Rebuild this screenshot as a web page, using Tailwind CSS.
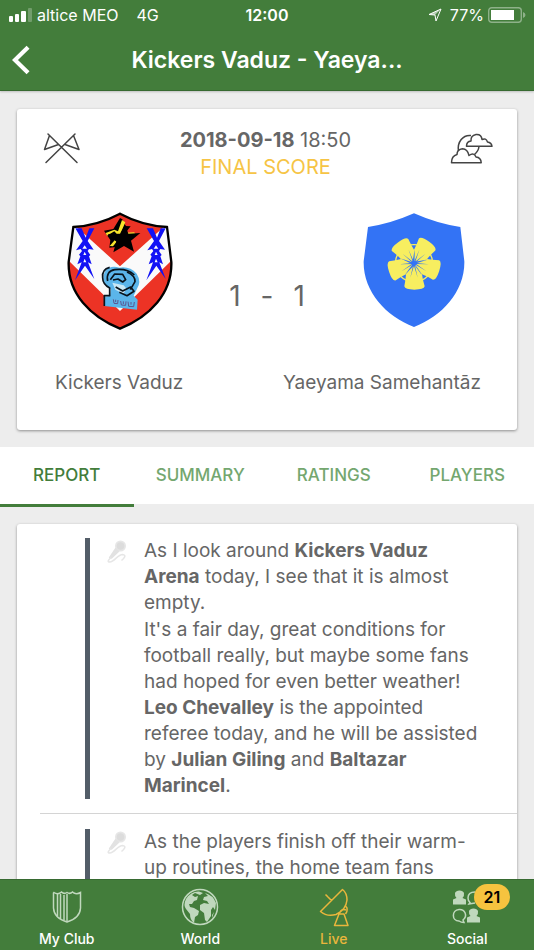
<!DOCTYPE html>
<html lang="en">
<head>
<meta charset="utf-8">
<meta name="viewport" content="width=device-width, initial-scale=1">
<title>Kickers Vaduz - Yaeyama Samehantāz</title>
<script src="https://cdn.jsdelivr.net/npm/@tailwindcss/browser@4"></script>
</head>
<body class="h-dvh flex flex-col overflow-hidden bg-[#ededed] font-[Inter,sans-serif] text-[#666]">

<header class="relative z-10 shrink-0 border-b border-[#376a31] bg-[#437d3b] text-white shadow-[0_1px_2px_rgba(0,0,0,0.2)]">
  <div class="grid h-[30px] grid-cols-3 items-center px-2 text-base">
    <div class="flex items-center whitespace-nowrap">
      <svg class="mr-1 h-4 w-[25px]" viewBox="0 0 25 16" fill="#fff" aria-hidden="true">
        <rect x="1" y="9" width="4" height="6" rx="1"/><rect x="7" y="7" width="4" height="8" rx="1"/><rect x="13" y="4" width="5" height="11" rx="1"/><rect x="20" y="1" width="4" height="14" rx="1" opacity=".25"/>
      </svg>
      <span>altice MEO</span><span class="ml-[18px]">4G</span>
    </div>
    <div class="text-center font-semibold">12:00</div>
    <div class="flex items-center justify-end whitespace-nowrap">
      <svg class="mr-2 h-[14px] w-[14px]" viewBox="0 0 14 14" aria-hidden="true"><path d="M13 1 1 6.500 7 7 8 13Z" fill="none" stroke="#fff" stroke-width="1"/><path d="M13 1 1 6.500 7 7Z" fill="#fff" opacity=".6"/></svg>
      <span>77%</span>
      <svg class="ml-1 h-4 w-[38px]" viewBox="0 0 38 16" aria-hidden="true"><rect x=".7" y=".7" width="32.600" height="14.600" rx="3" fill="none" stroke="#fff" stroke-opacity=".4" stroke-width="1.400"/><rect x="3" y="3" width="23" height="10" fill="#fff"/><path d="M35 5q2.500 1 2.500 3T35 11Z" fill="#fff" opacity=".4"/></svg>
    </div>
  </div>
  <div class="grid h-[60px] grid-cols-[60px_1fr_60px] items-center">
    <button type="button" aria-label="Back" class="h-full pl-3">
      <svg class="h-[30px] w-[19px]" viewBox="0 0 20 32" fill="none" stroke="#fff" stroke-width="4.500" aria-hidden="true"><path d="M17 2.500 3 16 17 29.500"/></svg>
    </button>
    <h1 class="text-center text-[23px] font-semibold whitespace-nowrap">Kickers Vaduz - Yaeya...</h1>
  </div>
</header>

<main class="min-h-0 flex-1 overflow-y-auto [scrollbar-width:none]">
  <section class="mx-[17px] mt-[18px] rounded-[3px] bg-white pb-[34px] shadow-[0_1px_3px_rgba(0,0,0,0.4)]">
    <div class="flex items-start justify-between px-6 pt-[18px]">
      <svg class="mt-[5px] h-[33px] w-[40px]" viewBox="41 132 40 33" fill="none" stroke="#444" stroke-width="1.500" stroke-linejoin="round" stroke-linecap="round" aria-hidden="true">
        <path d="M48 134 77 162.500M75 134 46 162.500M49.500 135.500 44.500 149.500 58.500 144.500M73.500 135.500 79 149.500 65 144.500"/>
      </svg>
      <div class="text-center text-[20px] leading-[27px]">
        <p><b class="font-bold">2018-09-18</b> 18:50</p>
        <p class="text-[#f6c445]">FINAL SCORE</p>
      </div>
      <svg class="mt-[5px] h-[33px] w-[43px]" viewBox="451 132 43 33" fill="none" stroke="#444" stroke-width="1.500" stroke-linejoin="round" aria-hidden="true">
        <path d="M459.500 151C458 142 464 134.500 472 135.500M480 146.500Q479.500 151 475.500 154.500"/>
        <path d="M467.500 146.300Q467.500 141.500 472 141Q471.500 135.500 477 134.500Q482.500 134 483 139.500Q487 137.500 488.500 142Q492.500 142.500 493 146.300Z"/>
        <path d="M452.500 162.700Q452.500 156 458 154.500Q458 149.500 463.500 148.800Q468.500 149 470 155.500Q475 152 477 157Q482 157.500 482.200 162.700Z"/>
      </svg>
    </div>

    <div class="mt-[31px] grid grid-cols-3 items-start justify-items-center px-[30px]">
      <svg class="h-[118px] w-[106px]" viewBox="38 35 318 354" role="img" aria-label="Kickers Vaduz crest">
        <defs>
          <clipPath id="shield"><path id="outline" d="M197 40Q262 75 338 80L351 185C354 280 285 350 197 385C109 350 40 280 43 185L57 80Q132 75 197 40Z"/></clipPath>
          <path id="bolts" d="M63 84H82L94 112 105 84H120L100 122 118 148 104 146 100 152 108 164 104 168 112 192 101 186 120 236 92 196 62 240 82 186 69 192 78 168 74 163 83 152 79 146 65 150 85 122ZM91 135 84 145H98ZM91 154 87 164H96ZM91 175 87 186H96Z" fill="#1212f5" fill-rule="evenodd"/>
        </defs>
        <g clip-path="url(#shield)">
          <path d="M38 35H356V389H38Z" fill="#ec3325"/>
          <path d="M38 70 67 80 197 198 328 80 356 70V176L197 332 38 176Z" fill="#fafafa"/>
        </g>
        <use href="#bolts"/><use href="#bolts" x="214"/>
        <path d="M197 53 204 57 214 77 229 78 210 102 185 140 165 142 168 119 149 91 177 86Z" fill="#000"/>
        <path d="M203 59 213 66 199 98 240 96 243 103 192 106 180 93 158 106 154 98 180 88 191 93ZM181 120 187 124 176 138 166 137Z" fill="#f8e52c"/>
        <path d="M213 74 222 100 258 98 230 121 239 154 209 137 177 156 186 123 160 101 197 100Z" fill="#000"/>
        <path d="M153 212Q168 194 195 202Q226 197 247 220Q262 244 248 265L238 286 250 298 248 328 150 317 148 290 167 286 169 266 153 251Q141 233 153 212Z" fill="#5bb5ea"/>
        <path d="M174 247 208 255 217 265 207 280 183 268Z" fill="#c9e8f6"/>
        <g fill="none" stroke="#08131c" stroke-width="5" stroke-linejoin="round">
          <path d="M166 201Q142 207 145 232Q145 251 166 263V286H150V317"/><path d="M160 242Q154 213 181 208Q218 203 240 224"/><path d="M168 238 181 221 205 222 214 238 205 245 191 236 176 239"/><path d="M218 215Q243 226 242 244L228 268M184 260 205 272 229 260 239 273 218 286 195 276"/>
        </g>
        <path d="M177 297l2 12 11 1 1-11M184 298v7M199 302l2 12 13 1 1-12M207 303v8M221 304l2 14 15 1 2-14M230 305v8" fill="none" stroke="#5b558f" stroke-width="3"/>
        <use href="#outline" fill="none" stroke="#000" stroke-width="7"/>
      </svg>
      <p class="mt-[66px] flex gap-5 text-[28px] leading-9"><span>1</span><span>-</span><span>1</span></p>
      <svg class="mt-[1px] h-[115px] w-[102px]" viewBox="37 40 306 345" role="img" aria-label="Yaeyama Samehantāz crest">
        <defs>
          <g id="petal"><path d="M190 191 166 224Q165 240 161 260Q163 270 191 270Q220 270 222 260Q216 240 214 224Z" fill="#f7ee60"/><path d="M190 184 179 234 190 198 201 234Z" fill="#3373f5"/><path d="M188 191 213 226 195 190Z" fill="#3373f5"/></g>
        </defs>
        <path d="M190 41Q260 72 329 82L341 185C343 275 275 350 190 382C105 350 37 275 39 185L52 82Q120 72 190 41Z" fill="#3373f5"/>
        <circle cx="190" cy="191" r="56" fill="none" stroke="#f7ee60" stroke-width="4"/>
        <use href="#petal"/><use href="#petal" transform="rotate(72 190 191)"/><use href="#petal" transform="rotate(144 190 191)"/><use href="#petal" transform="rotate(216 190 191)"/><use href="#petal" transform="rotate(288 190 191)"/>
        <circle cx="190" cy="191" r="7" fill="#3373f5"/>
      </svg>
    </div>
    <div class="mt-10 flex justify-between pr-9 pl-[38px] text-[19px] leading-[26px] whitespace-nowrap">
      <p>Kickers Vaduz</p>
      <p>Yaeyama Samehantāz</p>
    </div>
  </section>

  <nav class="mt-[17px] grid h-[60px] grid-cols-4 bg-[linear-gradient(#fff_57px,#ededed_57px)] text-[17px] font-medium text-[#74a76f]" aria-label="Match">
    <a href="#report" aria-current="page" class="flex items-center justify-center border-b-3 border-[#437d3b] text-[#437d3b]">REPORT</a>
    <a href="#summary" class="flex items-center justify-center border-b-3 border-transparent">SUMMARY</a>
    <a href="#ratings" class="flex items-center justify-center border-b-3 border-transparent">RATINGS</a>
    <a href="#players" class="flex items-center justify-center border-b-3 border-transparent">PLAYERS</a>
  </nav>

  <section id="report" class="mx-[17px] mt-[17px] rounded-[3px] bg-white pl-[23px] text-[19px] leading-[26px] shadow-[0_1px_3px_rgba(0,0,0,0.4)]">
    <svg class="hidden" aria-hidden="true">
      <symbol id="mic" viewBox="0 0 20 24"><circle cx="13.500" cy="6" r="5.500" fill="#e6e6e6"/><circle cx="13.500" cy="6" r="3.800" fill="#dcdcdc"/><path d="M8.500 7.500 12.500 11.500 5 18.500Q2.500 19.500 1.800 17.500Z" fill="#e2e2e2"/><path d="M4 17.500Q-1 22 3 22C7 22 11 14.500 15.500 14.500C20 15 17 18.500 14.500 20.500" fill="none" stroke="#e6e6e6" stroke-width="1.600"/></symbol>
    </svg>
    <article class="flex border-b border-[#d4d4d4] py-[14px]">
      <div class="ml-[45px] w-[5px] shrink-0 bg-[#535d68]"></div>
      <svg class="mt-[2px] ml-[17px] h-6 w-5 shrink-0" aria-hidden="true"><use href="#mic"/></svg>
      <div class="ml-[17px] pr-9">
        <p>As I look around <b>Kickers Vaduz Arena</b> today, I see that it is almost empty.</p>
        <p class="mt-px">It's a fair day, great conditions for football really, but maybe some fans had hoped for even better weather! <b>Leo Chevalley</b> is the appointed referee today, and he will be assisted by <b>Julian Giling</b> and <b>Baltazar Marincel</b>.</p>
      </div>
    </article>
    <article class="flex py-[15px]">
      <div class="ml-[45px] w-[5px] shrink-0 bg-[#535d68]"></div>
      <svg class="mt-[2px] ml-[17px] h-6 w-5 shrink-0" aria-hidden="true"><use href="#mic"/></svg>
      <div class="ml-[17px] pr-9">
        <p>As the players finish off their warm-up routines, the home team fans</p>
      </div>
    </article>
  </section>
</main>

<nav class="relative z-10 grid h-[71px] shrink-0 grid-cols-4 border-t border-[#376a31] bg-[#437d3b] text-sm leading-[18px] font-medium text-white" aria-label="Main">
  <a href="#club" class="flex flex-col items-center pt-2">
    <svg class="h-10 w-10" viewBox="0 0 40 40" fill="none" stroke="#c0d8bd" stroke-width="1.500" aria-hidden="true"><path d="M7 4.500Q10 6.500 13 5L14.500 4Q17 6.500 20 4.500Q23 6.500 25.500 4L27 5Q30 6.500 33.500 4.500V20Q33 30 20 34Q7 30 6.500 20V5Z"/><path d="M10.500 6V28M13.500 6V31M17 7V32M20 6V33"/></svg>
    <span class="mt-[2px]">My Club</span>
  </a>
  <a href="#world" class="flex flex-col items-center pt-2">
    <svg class="h-10 w-10" viewBox="0 0 40 40" aria-hidden="true"><circle cx="20" cy="19" r="17.500" fill="none" stroke="#c0d8bd" stroke-width="1.500"/><path fill="#c0d8bd" d="M6 11Q11 3 19 3.500L23 5 20 7 15 5 12 7 15 9 18 8 17 12 14 13 12 16 9 16 10 19 14 20 19 23 18 27 15 29 14 35Q10 32 10 26L6 21Q3 17 6 11ZM25 5Q33 7 36 15L35 22 33 19 31 22 31 28 27 34 25 32 24 25 20 22 20 17 24 15 29 16 27 13 23 12 24 9 28 8Z"/><path d="M32 27l2-3-2 6z" fill="#c0d8bd"/></svg>
    <span class="mt-[2px]">World</span>
  </a>
  <a href="#live" aria-current="page" class="flex flex-col items-center pt-2 text-[#e9b63c]">
    <svg class="h-10 w-10" viewBox="0 0 40 40" fill="none" stroke="#e9b63c" stroke-width="1.500" stroke-linejoin="round" aria-hidden="true"><path d="M28.500 1.500 6.500 23.500Q13 29 22 26.500Q32 22 33 12Q33 5 28.500 1.500ZM17.500 12.500 13 8M11.500 6.500 14 9M25 26H30L34 37.500H20.500ZM31.500 18Q35 21 31.500 26M25.500 25Q28 20 32 22"/></svg>
    <span class="mt-[2px]">Live</span>
  </a>
  <a href="#social" class="relative flex flex-col items-center pt-2">
    <svg class="h-10 w-10" viewBox="0 0 40 40" aria-hidden="true"><defs><path id="person" d="M6 13V10.500L9.500 9Q7.500 7 8 4Q9 1.500 12.500 1.500T17 4Q17.500 7 15.500 9L19 10.500V15.500H6Z" fill="#c0d8bd"/></defs><use href="#person" y="1"/><use href="#person" x="14" y="19"/><g fill="none" stroke="#c0d8bd" stroke-width="1.500"><path d="M28 4Q21 4 21 10Q21 13 23 14.500L22 16 28 15"/><path d="M12 21.500C4.500 22 4.500 33 12 33Q14 34.500 17 34.500L16 32C21 28 18 21 12 21.500Z"/></g></svg>
    <span class="mt-[2px]">Social</span>
    <span class="absolute top-1 left-[55%] flex h-[26px] w-9 items-center justify-center rounded-full bg-[#f6c33f] text-base font-semibold text-black">21</span>
  </a>
</nav>
</body>
</html>
